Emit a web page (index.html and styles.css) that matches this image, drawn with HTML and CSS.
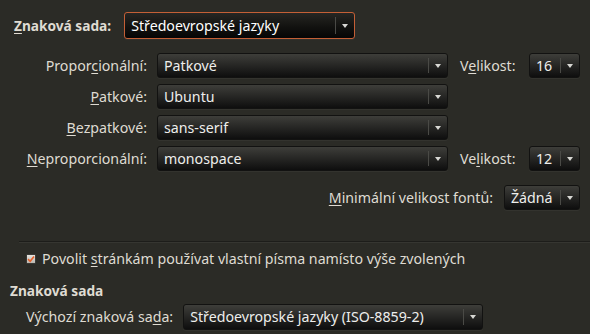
FILE: index.html
```html
<!DOCTYPE html>
<html lang="cs">
<head>
<meta charset="utf-8">
<link rel="stylesheet" href="styles.css">
</head>
<body>
<div class="page">
  <div class="charset-row">
    <span class="label bold"><u>Z</u>naková sada:</span>
    <div class="combo focus w-main"><span class="val">Středoevropské jazyky</span><span class="btn"><i class="arrow"></i></span></div>
  </div>

  <div class="fonts">
    <span class="label r">Propor<u>c</u>ionální:</span>
    <div class="combo"><span class="val">Patkové</span><span class="btn"><i class="arrow"></i></span></div>
    <span class="label sz">V<u>e</u>likost:</span>
    <div class="combo"><span class="val">16</span><span class="btn"><i class="arrow"></i></span></div>

    <span class="label r"><u>P</u>atkové:</span>
    <div class="combo"><span class="val">Ubuntu</span><span class="btn"><i class="arrow"></i></span></div>
    <span></span><span></span>

    <span class="label r"><u>B</u>ezpatkové:</span>
    <div class="combo"><span class="val">sans-serif</span><span class="btn"><i class="arrow"></i></span></div>
    <span></span><span></span>

    <span class="label r"><u>N</u>eproporcionální:</span>
    <div class="combo"><span class="val">monospace</span><span class="btn"><i class="arrow"></i></span></div>
    <span class="label sz">Ve<u>l</u>ikost:</span>
    <div class="combo"><span class="val">12</span><span class="btn"><i class="arrow"></i></span></div>
  </div>

  <div class="min-row">
    <span class="label"><u>M</u>inimální velikost fontů:</span>
    <div class="combo w-min"><span class="val">Žádná</span><span class="btn"><i class="arrow"></i></span></div>
  </div>

  <div class="sep"></div>

  <label class="check-row">
    <span class="check"><svg width="8" height="8" viewBox="0 0 8 8"><path d="M1 4.2 L3.2 6.3 L7 1.5" fill="none" stroke="#e8622c" stroke-width="1.6"/></svg></span>
    <span class="label">Povolit <u>s</u>tránkám používat vlastní písma namísto výše zvolených</span>
  </label>

  <div class="heading">Znaková sada</div>

  <div class="default-row">
    <span class="label">Výchozí znaková sa<u>d</u>a:</span>
    <div class="combo w-def"><span class="val">Středoevropské jazyky (ISO-8859-2)</span><span class="btn"><i class="arrow"></i></span></div>
  </div>
</div>
</body>
</html>
```

FILE: styles.css
```css
html, body {
  margin: 0;
  padding: 0;
  background: #2b2b26;
  width: 590px;
  height: 334px;
  overflow: hidden;
}
.page {
  font-family: "Noto Sans", "DejaVu Sans", sans-serif;
  font-size: 14.2px;
  line-height: 18px;
  color: #dfdbd2;
  display: flex;
  flex-direction: column;
}
u { text-decoration-thickness: 1px; text-underline-offset: 2px; }
.bold { font-weight: bold; font-size: 13.7px; }
.label { white-space: nowrap; }
.r { text-align: right; }

.combo {
  box-sizing: border-box;
  height: 25px;
  display: flex;
  align-items: center;
  border: 1px solid #121211;
  border-radius: 3px;
  background: linear-gradient(#3e3e3a, #262624 50%, #0e0e0e);
  color: #eeeeec;
  box-shadow: 0 1px 0 rgba(255,255,255,0.04);
}
.combo .val {
  flex: 1;
  padding-left: 6px;
  white-space: nowrap;
  overflow: hidden;
}
.combo .btn {
  width: 19px;
  align-self: stretch;
  display: flex;
  align-items: center;
  justify-content: center;
  position: relative;
}
.combo .btn::before {
  content: "";
  position: absolute;
  left: 0;
  top: 4px;
  bottom: 4px;
  width: 1px;
  background: #4a4a46;
}
.arrow {
  display: block;
  width: 0;
  height: 0;
  border-left: 3px solid transparent;
  border-right: 3px solid transparent;
  border-top: 4px solid #d8d8d4;
  margin-left: 1px;
}
.combo.focus {
  border-color: #c45f36;
  background: linear-gradient(#262623, #121210 55%, #050505);
  color: #ffffff;
  height: 27px;
}

.charset-row {
  display: flex;
  align-items: center;
  gap: 13px;
  padding: 12px 0 0 14px;
}
.w-main { width: 231px; }

.fonts {
  display: grid;
  grid-template-columns: 147px 291px 61px 51px;
  column-gap: 10px;
  row-gap: 6px;
  align-items: center;
  margin-top: 14px;
}
.sz { padding-left: 2px; }

.min-row {
  display: flex;
  justify-content: flex-end;
  align-items: center;
  gap: 11px;
  padding-right: 10px;
  margin-top: 14px;
}
.w-min { width: 76px; }

.sep {
  margin: 31px 0 0 19px;
  height: 1px;
  background: #1d1d1a;
  border-bottom: 1px solid #363631;
}

.check-row {
  display: flex;
  align-items: center;
  gap: 6px;
  padding-left: 26px;
  margin-top: 7px;
}
.check {
  box-sizing: border-box;
  width: 10px;
  height: 10px;
  border: 1px solid #3a3a36;
  border-radius: 1px;
  background: linear-gradient(#e6e4df, #b9b7b0);
  display: flex;
  align-items: center;
  justify-content: center;
}
.check svg { display: block; }

.heading {
  font-weight: bold;
  font-size: 13.7px;
  padding-left: 10px;
  margin-top: 14px;
}

.default-row {
  display: flex;
  align-items: center;
  gap: 10px;
  padding-left: 26px;
  margin-top: 4px;
}
.w-def { width: 300px; height: 26px; }
```
